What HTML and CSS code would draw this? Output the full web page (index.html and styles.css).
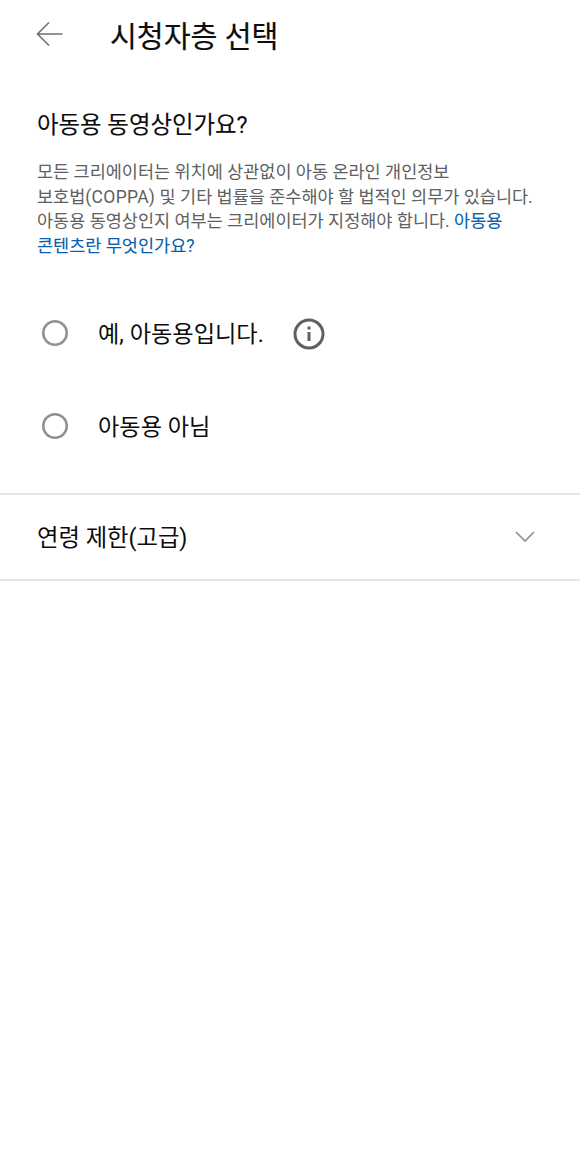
FILE: index.html
```html
<!DOCTYPE html>
<html lang="ko">
<head>
    <meta charset="UTF-8">
    <meta name="viewport" content="width=device-width, initial-scale=1.0">
    <title>시청자층 선택</title>
    <link rel="stylesheet" href="styles.css">
</head>
<body>
    <header class="topbar">
        <svg class="back" viewBox="0 0 28 26" width="28" height="26">
            <path d="M26.500 13H1.500M13 1.500L1.500 13L13 24.500"/>
        </svg>
        <h1>시청자층 선택</h1>
    </header>

    <main>
        <section class="audience">
            <h2>아동용 동영상인가요?</h2>
            <p class="description">
                <span class="line">모든 크리에이터는 위치에 상관없이 아동 온라인 개인정보</span>
                <span class="line">보호법<span class="latin">(COPPA)</span> 및 기타 법률을 준수해야 할 법적인 의무가 있습니다.</span>
                <span class="line">아동용 동영상인지 여부는 크리에이터가 지정해야 합니다. <a>아동용</a></span>
                <span class="line"><a>콘텐츠란 무엇인가요?</a></span>
            </p>
        </section>

        <div class="options">
            <label class="option">
                <input type="radio" name="audience">
                <span>예, 아동용입니다.</span>
                <svg class="info" viewBox="0 0 32 32" width="32" height="32">
                    <circle cx="16" cy="16" r="14"/>
                    <path d="M16 14v9M16 8.500v3"/>
                </svg>
            </label>
            <label class="option">
                <input type="radio" name="audience">
                <span>아동용 아님</span>
            </label>
        </div>

        <div class="age-limit">
            <span>연령 제한(고급)</span>
            <svg class="chevron" viewBox="0 0 20 12" width="20" height="12">
                <path d="M1 1l9 9 9-9"/>
            </svg>
        </div>
    </main>
</body>
</html>
```
FILE: styles.css
```css
* {
    box-sizing: border-box;
}
body {
    margin: 0;
    background: #fff;
    color: #0d0d0d;
    font-family: Roboto, "Noto Sans CJK KR", sans-serif;
}
h1, h2, p {
    margin: 0;
    font-weight: 400;
}
svg {
    display: block;
    fill: none;
    flex: none;
}
.topbar {
    display: flex;
    align-items: flex-start;
    height: 70px;
    padding: 16px 0 0 36px;
}
.back {
    margin-top: 5px;
    stroke: #707070;
    stroke-width: 1.6;
}
h1 {
    margin-left: 46px;
    font-size: 29.2px;
    line-height: 42px;
    -webkit-text-stroke: 0.2px;
}
.audience {
    padding: 39px 37px 0;
}
h2 {
    font-size: 23.4px;
    line-height: 32px;
    -webkit-text-stroke: 0.1px;
}
.description {
    margin-top: 19px;
    color: #606060;
    font-size: 17.5px;
    line-height: 24.7px;
}
.line {
    display: block;
    white-space: nowrap;
}
.latin {
    letter-spacing: 0.3px;
}
a {
    color: #065fb0;
    -webkit-text-stroke: 0.1px;
}
.options {
    padding: 28px 42px 20px;
}
.option {
    display: flex;
    align-items: center;
    height: 93px;
    font-size: 23.2px;
    line-height: 34px;
}
.option span {
    padding-top: 1px;
}
input {
    appearance: none;
    width: 26px;
    height: 26px;
    margin: 0 30px 1px 0;
    border-radius: 50%;
    box-shadow: inset 0 0 0 2.5px #909090;
}
.info {
    margin: 1px 0 0 29px;
    stroke: #606060;
    stroke-width: 3;
}
.age-limit {
    display: flex;
    align-items: center;
    justify-content: space-between;
    height: 88px;
    padding: 0 45px 0 37px;
    border-top: 2px solid #e5e5e5;
    border-bottom: 2px solid #e5e5e5;
    font-size: 23.3px;
}
.age-limit span {
    padding-bottom: 1px;
}
.chevron {
    stroke: #909090;
    stroke-width: 1.7;
}
```
